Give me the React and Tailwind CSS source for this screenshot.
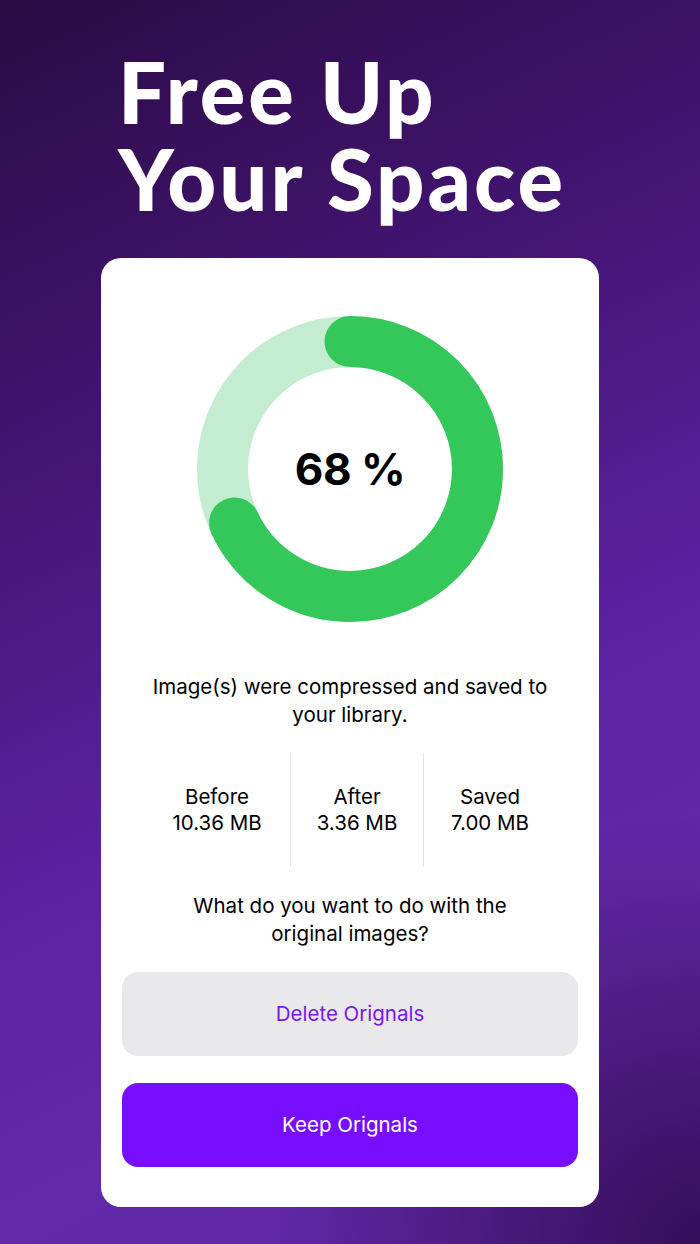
import React from 'react';

const stats = [
  { label: 'Before', value: '10.36 MB', width: 'w-[146px]', border: '' },
  { label: 'After', value: '3.36 MB', width: 'w-[133px]', border: 'border-l border-[#e4e4e6]' },
  { label: 'Saved', value: '7.00 MB', width: 'w-[133px]', border: 'border-l border-[#e4e4e6]' },
];

// progress ring, 68% clockwise from 12 o'clock
const Ring = ({ percent }) => {
  const r = 127.5;
  const c = 2 * Math.PI * r;
  return (
    <svg width="306" height="306" viewBox="0 0 306 306" className="block">
      <circle cx="153" cy="153" r={r} fill="none" stroke="#c3ecd0" strokeWidth="51" />
      <circle
        cx="153"
        cy="153"
        r={r}
        fill="none"
        stroke="#34c759"
        strokeWidth="51"
        strokeLinecap="round"
        strokeDasharray={`${(c * percent) / 100} ${c}`}
        transform="rotate(-90 153 153)"
      />
    </svg>
  );
};

export default function App() {
  return (
    <div className="w-[700px] h-[1244px] overflow-hidden bg-[radial-gradient(circle_at_100%_100%,rgba(52,12,86,0.95)_0%,rgba(52,12,86,0)_30%),linear-gradient(155deg,#2c0a44_0%,#41146f_28%,#5a22a0_58%,#6229a8_78%,#5c28a4_100%)] font-['Inter','Liberation_Sans',sans-serif]">
      <h1 className="pl-[118px] pt-[48px] text-white font-['Lato','Liberation_Sans',sans-serif] font-black text-[85px] leading-[87px] tracking-[3px]">
        <span className="block">Free Up</span>
        <span className="block">Your Space</span>
      </h1>

      <div className="mx-auto mt-[36px] w-[498px] rounded-[20px] bg-white px-[21px] pt-[58px] pb-[40px]">
        <div className="relative mx-auto w-[306px] h-[306px]">
          <Ring percent={68} />
          <div className="absolute inset-0 flex items-center justify-center text-black font-bold text-[44px] tracking-[-0.5px]">
            68 %
          </div>
        </div>

        <p className="mt-[51px] text-center text-[20.5px] leading-[28px] text-black">
          Image(s) were compressed and saved to
          <br />
          your library.
        </p>

        <div className="mt-[24px] flex pl-[22px]">
          {stats.map((s) => (
            <div
              key={s.label}
              className={`${s.width} ${s.border} h-[114px] flex flex-col items-center justify-center text-[20.5px] leading-[26px] text-black`}
            >
              <span>{s.label}</span>
              <span>{s.value}</span>
            </div>
          ))}
        </div>

        <p className="mt-[25px] text-center text-[20.5px] leading-[28px] text-black">
          What do you want to do with the
          <br />
          original images?
        </p>

        <button className="mt-[24px] w-full h-[84px] rounded-[16px] bg-[#e9e9eb] text-[#7a14f6] text-[20.5px]">
          Delete Orignals
        </button>
        <button className="mt-[27px] w-full h-[84px] rounded-[16px] bg-[#790dff] text-white text-[20.5px]">
          Keep Orignals
        </button>
      </div>
    </div>
  );
}
